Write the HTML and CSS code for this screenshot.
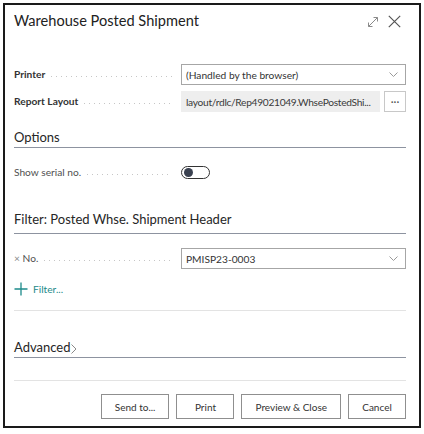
FILE: index.html
```html
<!DOCTYPE html>
<html lang="en">
<head>
<meta charset="utf-8">
<title>Warehouse Posted Shipment</title>
<link rel="stylesheet" href="styles.css">
</head>
<body>
<div class="frame">
  <div class="titlebar">
    <h1 class="title">Warehouse Posted Shipment</h1>
    <div class="title-icons">
      <svg class="icon-expand" width="12" height="12" viewBox="0 0 12 12" fill="none" stroke="#8a8a8a" stroke-width="1">
        <path d="M1.5 10.5 L10.5 1.5"/>
        <path d="M6.5 1.5 H10.5 V5.5"/>
        <path d="M1.5 6.5 V10.5 H5.5"/>
      </svg>
      <svg class="icon-close" width="13" height="13" viewBox="0 0 13 13" fill="none" stroke="#555" stroke-width="1.2">
        <path d="M0.8 0.8 L12.2 12.2 M12.2 0.8 L0.8 12.2"/>
      </svg>
    </div>
  </div>

  <div class="row">
    <div class="label strong"><span>Printer</span><span class="leader"></span></div>
    <div class="field select">
      <span class="value">(Handled by the browser)</span>
      <svg class="chevron" width="9" height="5" viewBox="0 0 9 5" fill="none" stroke="#9a9a9a" stroke-width="1"><path d="M0.5 0.5 L4.5 4.5 L8.5 0.5"/></svg>
    </div>
  </div>
  <div class="row row-gap">
    <div class="label strong"><span>Report Layout</span><span class="leader"></span></div>
    <div class="field-group">
      <div class="field readonly"><span class="value">layout/rdlc/Rep49021049.WhsePostedShi...</span></div>
      <button class="more" type="button">···</button>
    </div>
  </div>

  <h2 class="section section-options">Options</h2>
  <div class="row row-toggle">
    <div class="label light"><span>Show serial no.</span><span class="leader"></span></div>
    <div class="toggle"><span class="knob"></span></div>
  </div>

  <h2 class="section section-filter">Filter: Posted Whse. Shipment Header</h2>
  <div class="row row-no">
    <div class="label light"><span><span class="x">×</span> No.</span><span class="leader"></span></div>
    <div class="field select">
      <span class="value">PMISP23-0003</span>
      <svg class="chevron" width="9" height="5" viewBox="0 0 9 5" fill="none" stroke="#9a9a9a" stroke-width="1"><path d="M0.5 0.5 L4.5 4.5 L8.5 0.5"/></svg>
    </div>
  </div>
  <div class="add-filter">
    <svg width="14" height="14" viewBox="0 0 14 14" fill="none" stroke="#1d8a8a" stroke-width="1.3"><path d="M7 0.5 V13.5 M0.5 7 H13.5"/></svg>
    <span>Filter...</span>
  </div>
  <div class="sep sep-1"></div>

  <h2 class="section section-advanced">Advanced<svg class="adv-chevron" width="6" height="10" viewBox="0 0 6 10" fill="none" stroke="#8a8a8a" stroke-width="1"><path d="M0.5 0.5 L5 5 L0.5 9.5"/></svg></h2>
  <div class="sep sep-2"></div>

  <div class="actions">
    <button class="btn" type="button">Send to...</button>
    <button class="btn" type="button">Print</button>
    <button class="btn" type="button">Preview &amp; Close</button>
    <button class="btn" type="button">Cancel</button>
  </div>
</div>
</body>
</html>
```
FILE: styles.css
```css
* { box-sizing: border-box; }

html, body {
  margin: 0;
  padding: 0;
  background: #ffffff;
}

body {
  font-family: Lato, "Open Sans", sans-serif;
  color: #212121;
}

.frame {
  margin: 3px 0 0 3px;
  width: 418px;
  height: 425px;
  border: 2px solid #1a1a1a;
  padding: 0 13px 0 9px;
  background: #fff;
}

.titlebar {
  height: 59px;
  padding-top: 5px;
  display: flex;
  justify-content: space-between;
  align-items: flex-start;
}

.title {
  margin: 0;
  font-size: 14.6px;
  font-weight: 400;
  line-height: 22px;
  color: #222;
}

.title-icons {
  display: flex;
  align-items: center;
  gap: 9px;
  padding-top: 5px;
  padding-right: 5px;
}

.row {
  display: flex;
  align-items: center;
  height: 21px;
}

.row-gap { margin-top: 6px; }

.label {
  width: 167px;
  display: flex;
  align-items: center;
  font-size: 10.2px;
  line-height: 15px;
  white-space: nowrap;
  padding-right: 9px;
}

.label.strong { font-weight: 700; color: #333; }
.label.light { font-weight: 400; color: #505050; }

.label .x { color: #8a8a8a; }

.leader {
  flex: 1;
  height: 1px;
  margin-left: 6px;
  margin-top: 3px;
  background-image: linear-gradient(to right, #c6c6c6 1px, transparent 1px);
  background-size: 5px 1px;
  background-repeat: repeat-x;
}

.field {
  height: 21px;
  display: flex;
  align-items: center;
  font-size: 10.2px;
  color: #333;
  padding: 0 4px;
  min-width: 0;
}

.field .value {
  flex: 1;
  min-width: 0;
  overflow: hidden;
  white-space: nowrap;
  text-overflow: ellipsis;
}

.readonly .value { letter-spacing: -0.3px; color: #3a3a3a; }

.select {
  flex: 1;
  border: 1px solid #a6a6a6;
  background: #fff;
  padding-right: 7px;
}

.chevron { flex: none; }

.field-group {
  flex: 1;
  display: flex;
  gap: 4px;
  min-width: 0;
}

.readonly {
  flex: 1;
  background: #eeeeee;
  border: 1px solid #eeeeee;
  padding: 0 3px 0 4px;
}

.more {
  flex: none;
  width: 22px;
  height: 21px;
  padding: 0;
  border: 1px solid #c8c8c8;
  background: #fff;
  color: #555;
  font-size: 11px;
  font-family: inherit;
  letter-spacing: 0;
  line-height: 1;
}

.section {
  margin: 0;
  font-size: 13px;
  font-weight: 400;
  line-height: 19px;
  color: #262626;
  border-bottom: 1px solid #8d93a0;
}

.section-options { padding-top: 16px; }

.row-toggle { margin-top: 14px; }

.toggle {
  width: 29px;
  height: 13px;
  border: 1px solid #333;
  border-radius: 7px;
  position: relative;
  flex: none;
}

.toggle .knob {
  position: absolute;
  left: 2px;
  top: 1px;
  width: 9px;
  height: 9px;
  border-radius: 50%;
  background: #3a4150;
}

.section-filter { padding-top: 27px; padding-bottom: 4px; }

.row-no { margin-top: 14px; }

.add-filter {
  margin-top: 10px;
  height: 20px;
  display: flex;
  align-items: center;
  gap: 5px;
  font-size: 10.2px;
  color: #1d8a8a;
}

.sep {
  height: 1px;
  background: #e3e3e3;
}

.sep-1 { margin-top: 11px; }

.section-advanced {
  padding-top: 27px;
  display: flex;
  align-items: center;
}

.adv-chevron { margin-left: 1px; margin-top: 2px; }

.sep-2 { margin-top: 22px; }

.actions {
  margin-top: 13px;
  display: flex;
  justify-content: flex-end;
  gap: 7px;
}

.btn {
  height: 25px;
  min-width: 58px;
  padding: 0 13px;
  border: 1px solid #8f8f8f;
  background: #fff;
  color: #333;
  font-family: inherit;
  font-size: 10px;
  line-height: 1;
}
```
